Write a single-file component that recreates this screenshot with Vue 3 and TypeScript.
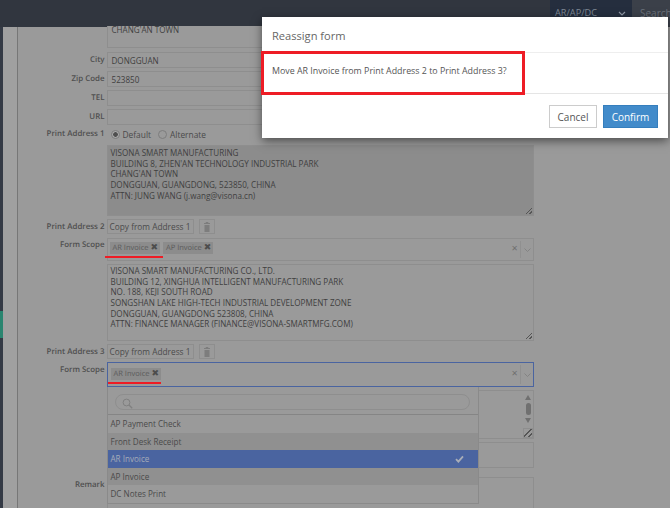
<script setup lang="ts">
const address1 = [
  'VISONA SMART MANUFACTURING',
  "BUILDING 8, ZHEN'AN TECHNOLOGY INDUSTRIAL PARK",
  "CHANG'AN TOWN",
  'DONGGUAN, GUANGDONG, 523850, CHINA',
  'ATTN: JUNG WANG (j.wang@visona.cn)'
]
const address2 = [
  'VISONA SMART MANUFACTURING CO., LTD.',
  'BUILDING 12, XINGHUA INTELLIGENT MANUFACTURING PARK',
  'NO. 188, KEJI SOUTH ROAD',
  'SONGSHAN LAKE HIGH-TECH INDUSTRIAL DEVELOPMENT ZONE',
  'DONGGUAN, GUANGDONG 523808, CHINA',
  'ATTN: FINANCE MANAGER (FINANCE@VISONA-SMARTMFG.COM)'
]
const options = ['AP Payment Check', 'Front Desk Receipt', 'AR Invoice', 'AP Invoice', 'DC Notes Print']
const trash = 'M3 2h1.5l.5-1h2l.5 1H9v1H3zM3.5 4h5v7h-5z'
</script>

<template>
  <div class="page">
    <header class="topbar">
      <div class="module">
        <span>AR/AP/DC</span>
        <svg width="8" height="5" viewBox="0 0 8 5"><path d="M1 1l3 3 3-3" fill="none" stroke="#8d96a3" stroke-width="1.2" /></svg>
      </div>
      <div class="search">Search</div>
    </header>

    <div class="rail"><span class="rail-active"></span></div>
    <div class="side"></div>

    <main class="form">
      <div class="row t0">
        <span class="label"></span>
        <div class="box text">CHANG'AN TOWN</div>
      </div>
      <div class="row input-row mt5">
        <span class="label">City</span>
        <div class="box input">DONGGUAN</div>
      </div>
      <div class="row input-row">
        <span class="label">Zip Code</span>
        <div class="box input">523850</div>
      </div>
      <div class="row input-row">
        <span class="label">TEL</span>
        <div class="box input"></div>
      </div>
      <div class="row input-row">
        <span class="label">URL</span>
        <div class="box input"></div>
      </div>
      <div class="row radios">
        <span class="label">Print Address 1</span>
        <span class="radio on"></span><span class="radio-text">Default</span>
        <span class="radio"></span><span class="radio-text">Alternate</span>
      </div>
      <div class="row">
        <span class="label"></span>
        <div class="box text readonly a1">
          <div v-for="line in address1" :key="line">{{ line }}</div>
          <span class="grip"></span>
        </div>
      </div>
      <div class="row action-row">
        <span class="label">Print Address 2</span>
        <button class="copy">Copy from Address 1</button>
        <button class="bin"><svg width="12" height="12" viewBox="0 0 12 12"><path :d="trash" fill="#7d7d7d" /></svg></button>
      </div>
      <div class="row scope s2">
        <span class="label">Form Scope</span>
        <div class="box select">
          <span class="chip marked">AR Invoice <i>✖</i></span>
          <span class="chip">AP Invoice <i>✖</i></span>
          <span class="clear">✕</span>
          <span class="caret"><svg width="7" height="4" viewBox="0 0 7 4"><path d="M.5.5l3 3 3-3" fill="none" stroke="#838383" /></svg></span>
        </div>
      </div>
      <div class="row">
        <span class="label"></span>
        <div class="box text a2">
          <div v-for="line in address2" :key="line">{{ line }}</div>
          <span class="grip"></span>
        </div>
      </div>
      <div class="row action-row p3">
        <span class="label">Print Address 3</span>
        <button class="copy">Copy from Address 1</button>
        <button class="bin"><svg width="12" height="12" viewBox="0 0 12 12"><path :d="trash" fill="#7d7d7d" /></svg></button>
      </div>
      <div class="row scope s3">
        <span class="label">Form Scope</span>
        <div class="box select focus">
          <span class="chip marked">AR Invoice <i>✖</i></span>
          <span class="clear">✕</span>
          <span class="caret"><svg width="7" height="4" viewBox="0 0 7 4"><path d="M.5.5l3 3 3-3" fill="none" stroke="#838383" /></svg></span>

          <div class="dropdown">
            <div class="filter">
              <div class="filter-input">
                <svg width="11" height="11" viewBox="0 0 11 11"><circle cx="4.5" cy="4.5" r="3.4" fill="none" stroke="#808080" /><path d="M7 7l3.2 3.2" stroke="#808080" stroke-width="1.3" /></svg>
              </div>
            </div>
            <div
              v-for="(opt, i) in options"
              :key="opt"
              class="option"
              :class="{ odd: i % 2 === 1, active: opt === 'AR Invoice' }"
            >
              {{ opt }}
              <svg v-if="opt === 'AR Invoice'" width="9" height="8" viewBox="0 0 9 8"><path d="M1 4.2l2.4 2.4L8 1.4" fill="none" stroke="#a9aeb8" stroke-width="1.8" /></svg>
            </div>
          </div>
        </div>
      </div>
      <div class="row">
        <span class="label"></span>
        <div class="box text a3">
          <div class="scrollbar">
            <span class="up"></span><span class="thumb"></span><span class="down"></span>
          </div>
          <span class="grip boxed"></span>
        </div>
      </div>
      <div class="row">
        <span class="label"></span>
        <div class="box a4"></div>
      </div>
      <div class="row remark">
        <span class="label">Remark</span>
        <div class="box a5"></div>
      </div>
    </main>

    <section class="modal">
      <div class="modal-title">Reassign form</div>
      <div class="modal-body">
        Move AR Invoice from Print Address 2 to Print Address 3?
        <span class="callout"></span>
      </div>
      <div class="modal-foot">
        <button class="btn">Cancel</button>
        <button class="btn primary">Confirm</button>
      </div>
    </section>
  </div>
</template>

<style>
html, body { margin: 0; background: #9a9a9a; overflow: hidden; }
</style>

<style scoped>
.page {
  position: relative;
  width: 670px;
  height: 508px;
  overflow: hidden;
  display: grid;
  grid-template-columns: 3px 14px 1fr;
  grid-template-rows: 27px 1fr;
  background: #9a9a9a;
  font-family: "Open Sans", sans-serif;
  font-size: 8.1px;
  color: #3f3f3f;
}
.topbar {
  grid-column: 1 / 4;
  display: flex;
  justify-content: flex-end;
  background: #31363f;
}
.module {
  width: 82px;
  box-sizing: border-box;
  padding: 6px 6px 0 5px;
  display: flex;
  justify-content: space-between;
  background: #252e3e;
  color: #7e8794;
  font-size: 9.2px;
}
.module svg { margin-top: 5px; }
.search {
  width: 38px;
  padding: 6px 0 0 8px;
  box-sizing: border-box;
  background: #3b4049;
  color: #6a707a;
  font-size: 10px;
  overflow: hidden;
}
.rail { position: relative; background: #343a45; }
.rail-active {
  position: absolute;
  left: 0;
  right: 0;
  top: 284px;
  height: 27px;
  background: #2a8570;
}
.side { background: #a0a0a0; }
.form {
  border-left: 1.5px solid #777;
  padding-right: 136px;
  min-width: 0;
}
.row { display: flex; align-items: flex-start; }
.label {
  width: 86.5px;
  flex: none;
  margin-right: 2px;
  padding-top: 3px;
  text-align: right;
  color: #4f4f4f;
  font-size: 7.9px;
  font-weight: 600;
  line-height: 11px;
  text-rendering: geometricPrecision;
}
.box {
  position: relative;
  flex: 1;
  box-sizing: border-box;
  border: 1px solid #8e8e8e;
  background: #9a9a9a;
}
.t0 .box { height: 22px; margin-top: -1px; border-top: 0; padding: 0 4px; line-height: 7px; }
.mt5 { margin-top: 4px; }
.input-row { margin-bottom: 3px; }
.input { height: 16px; padding: 1px 4px; line-height: 13px; }
.text { padding: 3px 3px; line-height: 10.65px; }
.readonly { background: #8c8c8c; }
.radios { height: 12px; margin-bottom: 5px; align-items: center; font-size: 8.4px; }
.radios .label { padding-top: 1px; }
.radio {
  box-sizing: border-box;
  width: 9px;
  height: 9px;
  margin: 0 3px 0 4px;
  border: 1px solid #7d7d7d;
  border-radius: 50%;
}
.radio.on { background: radial-gradient(circle, #4f4f4f 0 2px, #a8a8a8 2.6px); }
.radio-text { margin-right: 3px; color: #4a4a4a; }
.a1 { height: 71px; padding-top: 2px; }
.a2 { height: 77px; margin-top: 3px; padding-top: 1px; }
.grip {
  position: absolute;
  right: 1px;
  bottom: 1px;
  width: 6px;
  height: 6px;
  background: linear-gradient(135deg, transparent 42%, #555 42% 55%, transparent 55% 70%, #555 70% 85%, transparent 85%);
}
.action-row { margin-top: 3px; height: 15px; }
.copy {
  box-sizing: border-box;
  height: 15px;
  width: 87px;
  padding: 0;
  border: 1px solid #8e8e8e;
  background: #9a9a9a;
  color: #4a4a4a;
  font: 8.3px "Open Sans", sans-serif;
  white-space: nowrap;
}
.bin {
  box-sizing: border-box;
  display: flex;
  align-items: center;
  justify-content: center;
  width: 16px;
  height: 15px;
  margin-left: 5px;
  padding: 0;
  border: 1px solid #8e8e8e;
  background: #9a9a9a;
}
.scope { margin-top: 4px; }
.scope .label { padding-top: 2px; }
.select {
  display: flex;
  align-items: flex-start;
  gap: 3px;
  padding: 3px 3px 3px 2px;
}
.s2 .select { height: 23px; }
.s3 .select { height: 25px; padding: 5px 3px; }
.s3 { margin-top: 3px; }
.s3 .label { padding-top: 3px; }
.focus { border: 1px solid #4a64a0; }
.chip {
  position: relative;
  box-sizing: border-box;
  height: 12px;
  padding: 0 2px 0 3px;
  background: #8c8c8c;
  color: #5b5b5b;
  font-size: 7.5px;
  line-height: 13px;
  white-space: nowrap;
  text-rendering: geometricPrecision;
}
.chip i { font: normal 9px/10px "DejaVu Sans", sans-serif; color: #4d4d4d; }
.chip.marked::after {
  content: "";
  position: absolute;
  left: -5px;
  right: -3px;
  top: 14px;
  height: 2px;
  background: #ee1c25;
}
.s3 .chip.marked::after { left: -3px; right: 0; top: 14px; }
.clear {
  position: absolute;
  right: 15px;
  top: 5px;
  color: #707070;
  font: 8px "DejaVu Sans", sans-serif;
}
.s3 .clear { top: 6px; }
.caret {
  position: absolute;
  right: 0;
  top: 2px;
  bottom: 2px;
  width: 12px;
  display: flex;
  align-items: center;
  justify-content: center;
  border-left: 1px solid #909090;
}
.dropdown {
  position: absolute;
  z-index: 2;
  left: -1px;
  top: 24px;
  width: 372px;
  box-sizing: border-box;
  background: #9a9a9a;
  border: 1px solid #8a8a8a;
  border-top: 0;
}
.filter {
  padding: 7px 7px 4px;
  border-bottom: 1px solid #858585;
}
.filter-input {
  height: 16px;
  width: 355px;
  box-sizing: border-box;
  padding: 3px 6px;
  border: 1px solid #8e8e8e;
  border-radius: 9px;
}
.option {
  display: flex;
  align-items: center;
  justify-content: space-between;
  box-sizing: border-box;
  height: 17.5px;
  padding: 0 14px 0 3px;
  color: #4a4a4a;
}
.option.odd { background: #909090; }
.option.active { background: #4a64a0; color: #a5abb8; }
.a3 { height: 49px; margin-top: 3px; }
.scrollbar {
  position: absolute;
  right: 0;
  top: 4px;
  width: 10px;
  display: flex;
  flex-direction: column;
  align-items: center;
}
.up, .down { width: 0; height: 0; border: 3.5px solid transparent; }
.up { border-top: 0; border-bottom: 5px solid #707070; }
.down { border-bottom: 0; border-top: 5px solid #707070; }
.thumb { width: 5px; height: 12px; margin: 3px 0; border-radius: 3px; background: #707070; }
.grip.boxed {
  right: 0;
  bottom: 0;
  width: 10px;
  height: 10px;
  border: 1px solid #8e8e8e;
  box-sizing: border-box;
}
.a4 { height: 26px; margin-top: 3px; }
.remark { margin-top: 9px; }
.a5 { height: 40px; }
.modal {
  position: absolute;
  z-index: 5;
  left: 262px;
  top: 17px;
  width: 406px;
  height: 121px;
  background: #fff;
  box-shadow: 0 3px 9px rgba(0, 0, 0, 0.5);
  color: #555;
}
.modal-title {
  box-sizing: border-box;
  height: 36px;
  padding: 10px 10px 0;
  border-bottom: 1px solid #eee;
  font-size: 11.1px;
  line-height: 17px;
  color: #666;
}
.modal-body {
  position: relative;
  box-sizing: border-box;
  height: 41px;
  padding: 11px 10px;
  border-bottom: 1px solid #e5e5e5;
  font-size: 8.85px;
  line-height: 14px;
}
.callout {
  position: absolute;
  left: -1px;
  top: -2px;
  width: 264px;
  height: 44px;
  box-sizing: border-box;
  border: 3px solid #ee1c25;
}
.modal-foot {
  display: flex;
  justify-content: flex-end;
  gap: 6px;
  padding: 11px 10px;
}
.btn {
  box-sizing: border-box;
  height: 23px;
  width: 48px;
  padding: 0;
  background: #fff;
  border: 1px solid #ccc;
  color: #555;
  font: 10px "Open Sans", sans-serif;
}
.btn.primary {
  width: 55px;
  background: #428bca;
  border-color: #357ebd;
  color: #fff;
}
</style>
